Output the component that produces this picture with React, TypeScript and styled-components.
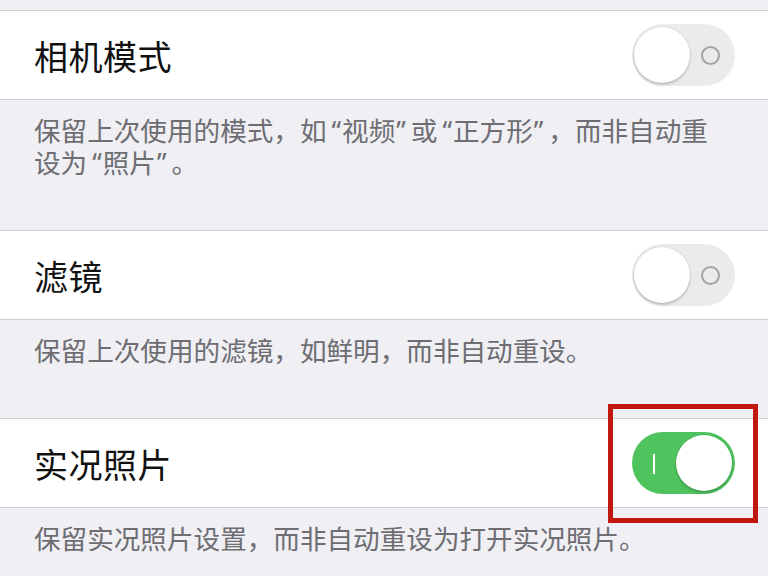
import React from "react";
import styled, { createGlobalStyle } from "styled-components";

const Global = createGlobalStyle`
  html, body { margin: 0; padding: 0; background: #efeff4; }
  body { font-family: "Noto Sans", "Noto Sans CJK SC", sans-serif; }
`;

const Page = styled.div`
  width: 768px;
  height: 576px;
  overflow: hidden;
  background: #efeff4;
  position: relative;
  display: flex;
  flex-direction: column;
`;

const TopGap = styled.div`
  height: 10px;
  flex: none;
`;

const Row = styled.div`
  flex: none;
  height: 88px;
  background: #ffffff;
  border-top: 1px solid #cfcfd3;
  border-bottom: 1px solid #cfcfd3;
  display: flex;
  align-items: center;
  justify-content: space-between;
  padding: 0 33px 0 34px;
  position: relative;
`;

const Title = styled.div`
  font-family: "Noto Sans CJK SC", sans-serif;
  font-size: 34px;
  color: #111111;
  letter-spacing: 0.5px;
  line-height: 1;
  padding-top: 2px;
`;

const Footer = styled.div`
  flex: none;
  padding: 15px 36px 51px 34px;
  font-family: "Noto Sans", "Noto Sans CJK SC", sans-serif;
  font-size: 26.6px;
  line-height: 32px;
  color: #6d6d72;
`;

const Quote = styled.span<{ $close?: boolean }>`
  font-family: "Noto Sans", sans-serif;
  margin-left: ${(p) => (p.$close ? "1px" : "5px")};
  margin-right: ${(p) => (p.$close ? "5px" : "1px")};
`;

const Track = styled.div<{ $on: boolean }>`
  position: relative;
  width: 103px;
  height: 62px;
  border-radius: 31px;
  background: ${(p) => (p.$on ? "#4fc35d" : "#ebebed")};
  flex: none;
`;

const Knob = styled.div<{ $on: boolean }>`
  position: absolute;
  top: 3px;
  left: ${(p) => (p.$on ? "44px" : "2px")};
  width: 56px;
  height: 56px;
  border-radius: 50%;
  background: #ffffff;
  box-shadow: 0 2px 3px rgba(0, 0, 0, 0.18), 0 0 0 1px rgba(0, 0, 0, 0.05);
`;

const OffMark = styled.div`
  position: absolute;
  left: 69px;
  top: 22px;
  width: 15px;
  height: 15px;
  border-radius: 50%;
  border: 2px solid #a3a3a5;
`;

const OnMark = styled.div`
  position: absolute;
  left: 21px;
  top: 22px;
  width: 2px;
  height: 20px;
  background: #ffffff;
`;

const Highlight = styled.div`
  position: absolute;
  left: 608px;
  top: 404px;
  width: 140px;
  height: 109px;
  border: 5px solid #c0180f;
  pointer-events: none;
`;

const Toggle = ({ on }: { on: boolean }) => (
  <Track $on={on}>
    {on ? <OnMark /> : <OffMark />}
    <Knob $on={on} />
  </Track>
);

const Q = ({ children }: { children: string }) => (
  <>
    <Quote>“</Quote>
    {children}
    <Quote $close>”</Quote>
  </>
);

export default function App() {
  return (
    <Page>
      <Global />
      <TopGap />
      <Row>
        <Title>相机模式</Title>
        <Toggle on={false} />
      </Row>
      <Footer>
        保留上次使用的模式，如<Q>视频</Q>或<Q>正方形</Q>，而非自动重设为<Q>照片</Q>。
      </Footer>
      <Row>
        <Title>滤镜</Title>
        <Toggle on={false} />
      </Row>
      <Footer>保留上次使用的滤镜，如鲜明，而非自动重设。</Footer>
      <Row>
        <Title>实况照片</Title>
        <Toggle on={true} />
      </Row>
      <Footer>保留实况照片设置，而非自动重设为打开实况照片。</Footer>
      <Highlight />
    </Page>
  );
}
